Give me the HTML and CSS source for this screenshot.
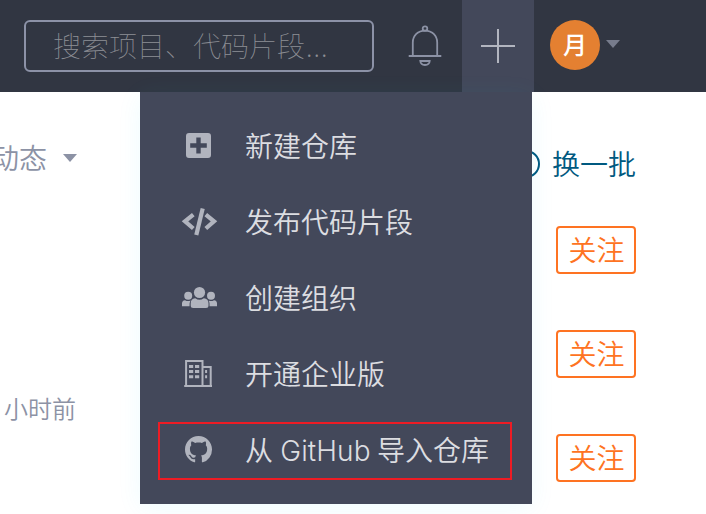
FILE: index.html
```html
<!DOCTYPE html>
<html lang="zh-CN">
<head>
<meta charset="utf-8">
<title>代码仓库</title>
<link rel="stylesheet" href="styles.css">
</head>
<body>
<header class="topbar">
  <div class="search">搜索项目、代码片段<span class="dots">...</span></div>
  <svg class="bell" viewBox="0 0 34 42" width="34" height="42" fill="none" stroke="#8c92a5" stroke-width="1.8">
    <circle cx="17" cy="3.6" r="2.3"/>
    <path d="M4.8 30.5V17.5C4.8 10.5 10 5.6 17 5.6S29.200 10.500 29.200 17.500V30.500M.7 31H33.300M12.300 36H21.700C21.300 41.300 12.700 41.300 12.300 36Z"/>
  </svg>
  <div class="create">
    <svg viewBox="0 0 36 36" width="36" height="36" stroke="#b2b5bf" stroke-width="2"><path d="M18 1V35M1 18H35"/></svg>
  </div>
  <div class="avatar">月</div>
  <span class="caret caret-user"></span>
</header>
<main class="page">
  <section class="feed">
    <div class="feed-filter"><span>动态</span><span class="caret caret-feed"></span></div>
    <div class="feed-time">小时前</div>
  </section>
  <aside class="suggest">
    <div class="refresh"><span class="ring"></span><span>换一批</span></div>
    <div class="follow">关注</div>
    <div class="follow">关注</div>
    <div class="follow">关注</div>
  </aside>
</main>
<nav class="menu">
  <div class="item">
    <svg viewBox="0 0 36 28" width="36" height="28"><path fill="#b1b4be" fill-rule="evenodd" d="M9 1H28A3 3 0 0 1 31 4V23A3 3 0 0 1 28 26H9A3 3 0 0 1 6 23V4A3 3 0 0 1 9 1ZM16.300 5.500V11.300H10.200V15.700H16.300V21.500H20.700V15.700H26.800V11.300H20.700V5.500Z"/></svg>
    <span>新建仓库</span>
  </div>
  <div class="item">
    <svg viewBox="0 0 36 28" width="36" height="28" fill="none" stroke="#b1b4be" stroke-width="4.200"><path d="M13.300 6.600L5 13.400L13.300 20.500M25.800 6.600L34 13.400L25.800 20.500"/><path d="M22.700 .5L16.300 27"/></svg>
    <span>发布代码片段</span>
  </div>
  <div class="item">
    <svg viewBox="0 0 36 28" width="36" height="28" fill="#b1b4be"><circle cx="19.500" cy="8.500" r="5.600"/><circle cx="8.200" cy="11.800" r="4"/><circle cx="31" cy="11.800" r="4"/><path d="M10.700 23.800V19.500Q10.700 14.700 15.200 14.300Q19.500 17.300 23.800 14.300Q28.500 14.700 28.500 19.500V21.500Q28.500 24 26 24H13.200Q10.700 24 10.700 21.500ZM2 22.200V19.500Q2 16.600 5 16.200Q7.700 17.800 10.500 16.500Q9.500 18 9.500 22.200ZM37 22.200V19.500Q37 16.600 34 16.200Q31.300 17.800 28.800 16.500Q29.600 18 29.600 22.200Z"/></svg>
    <span>创建组织</span>
  </div>
  <div class="item">
    <svg viewBox="0 0 36 28" width="36" height="28"><path fill="none" stroke="#b1b4be" stroke-width="2" d="M4.200 26H32M6.100 26V1H22.500V26M22.500 7H30.700V26"/><path fill="#b1b4be" d="M9 5h4.200v3H9zM15 5h4.200v3H15zM9 10h4.200v3H9zM15 10h4.200v3H15zM9 15.200h4.200v3H9zM15 15.200h4.200v3H15zM25.100 10h2v3h-2zM25.100 15.200h2v3h-2z"/></svg>
    <span>开通企业版</span>
  </div>
  <div class="item">
    <svg viewBox="0 0 36 28" width="36" height="28"><path fill="#b1b4be" transform="translate(5 0) scale(1.69)" d="M8 0C3.580 0 0 3.580 0 8c0 3.540 2.290 6.530 5.470 7.590.4.070.55-.17.55-.38 0-.19-.01-.82-.01-1.490-2.010.37-2.530-.49-2.690-.94-.09-.23-.48-.94-.82-1.130-.28-.15-.68-.52-.01-.53.63-.01 1.080.58 1.230.82.720 1.210 1.870.87 2.330.66.070-.52.280-.87.510-1.070-1.780-.2-3.640-.89-3.640-3.950 0-.87.310-1.590.82-2.150-.08-.2-.36-1.020.08-2.120 0 0 .67-.21 2.200.82.640-.18 1.320-.27 2-.27s1.360.09 2 .27c1.530-1.040 2.200-.82 2.200-.82.440 1.100.16 1.920.08 2.120.51.560.82 1.270.82 2.150 0 3.070-1.870 3.750-3.650 3.950.29.25.54.73.54 1.480 0 1.070-.01 1.930-.01 2.200 0 .21.150.46.550.38A8.010 8.010 0 0 0 16 8c0-4.420-3.580-8-8-8z"/></svg>
    <span>从 <span class="latin">GitHub</span> 导入仓库</span>
  </div>
  <div class="outline"></div>
</nav>
</body>
</html>
```

FILE: styles.css
```css
* { box-sizing: border-box; }
body {
  position: relative;
  width: 706px;
  height: 514px;
  margin: 0;
  overflow: hidden;
  background: #fff;
  font-family: "Noto Sans CJK SC", sans-serif;
  font-size: 28px;
  font-weight: 350;
  white-space: nowrap;
}
.topbar {
  display: flex;
  align-items: center;
  height: 92px;
  padding-left: 24px;
  background: #313642;
}
.search {
  width: 350px;
  height: 52px;
  padding-left: 27px;
  border: 2px solid #8c92a7;
  border-radius: 6px;
  color: #8d8f95;
  font-weight: 100;
  line-height: 47px;
}
.dots { margin-left: 1px; letter-spacing: 1px; }
.bell { margin: 0 20px 0 34px; }
.create {
  display: flex;
  align-items: center;
  justify-content: center;
  width: 72px;
  height: 92px;
  background: #43485a;
}
.avatar {
  width: 50px;
  height: 50px;
  margin: -2px 6px 0 16px;
  border-radius: 50%;
  background: #e48031;
  color: #fff;
  font-size: 24px;
  font-weight: 500;
  line-height: 48px;
  text-align: center;
}
.caret {
  width: 14px;
  height: 8px;
  clip-path: polygon(0 0, 100% 0, 50% 100%);
}
.caret-user { margin-top: -4px; background: #777c8c; }
.page { display: flex; justify-content: space-between; }
.feed { padding-top: 41px; color: #8c92a5; }
.feed-filter {
  display: flex;
  align-items: center;
  gap: 16px;
  height: 48px;
  margin-left: -9px;
}
.caret-feed { margin-top: 2px; background: #8c92a5; }
.feed-time { margin: 209px 0 0 4px; font-size: 24px; line-height: 36px; }
.suggest {
  display: flex;
  flex-direction: column;
  align-items: flex-end;
  gap: 56px;
  padding: 51px 70px 0 0;
}
.refresh {
  display: flex;
  align-items: center;
  gap: 12px;
  height: 40px;
  margin-bottom: -13px;
  color: #005980;
}
.ring { width: 28px; height: 28px; margin-top: 1px; border: 2px solid; border-radius: 50%; }
.follow {
  width: 80px;
  height: 48px;
  padding-left: 1px;
  border: 2px solid #fe7322;
  border-radius: 4px;
  color: #fe7322;
  line-height: 43px;
  text-align: center;
}
.menu {
  position: absolute;
  top: 92px;
  left: 140px;
  width: 392px;
  height: 412px;
  padding: 16px 0;
  background: #43485a;
  box-shadow: 0 4px 24px rgba(0, 210, 240, .07);
  color: #dcdde1;
}
.item {
  display: flex;
  align-items: center;
  gap: 29px;
  height: 76px;
  padding-left: 40px;
}
.item svg { overflow: visible; }
.item > span { margin-top: -2px; }
.latin {
  margin-left: 1px;
  font-family: Inter, sans-serif;
  font-weight: 350;
  letter-spacing: .1px;
}
.outline {
  position: absolute;
  top: 330px;
  left: 18px;
  width: 354px;
  height: 58px;
  border: 2px solid #ed1c24;
}
```
